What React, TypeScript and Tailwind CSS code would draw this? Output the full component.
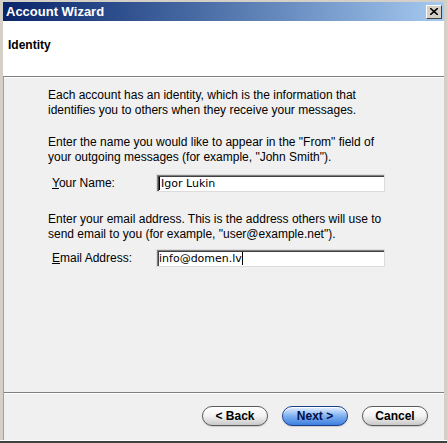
import React from 'react';

const FONT = { fontFamily: '"Liberation Sans", Arial, sans-serif' };

function WizardButton({ label, primary = false }: { label: string; primary?: boolean }) {
  return (
    <button
      className={`h-[20px] w-[66px] rounded-full border text-[12px] font-bold leading-none ${
        primary
          ? 'border-[#1c3f8c] bg-gradient-to-b from-[#e8f2ff] via-[#7fb0f0] to-[#3d7fe0] text-[#00104a]'
          : 'border-[#5a5a5a] bg-gradient-to-b from-white via-[#f2f2f2] to-[#c9c9c9] text-black'
      } shadow-[inset_0_1px_0_rgba(255,255,255,0.9),0_1px_1px_rgba(0,0,0,0.15)]`}
    >
      {label}
    </button>
  );
}

function Field({ accessKey, rest, value, caretAfter }: { accessKey: string; rest: string; value: string; caretAfter?: boolean }) {
  return (
    <div className="flex items-center">
      <span className="w-[109px] pl-[4px] text-[12px] text-black">
        <span className="underline">{accessKey}</span>
        {rest}
      </span>
      <div className="flex h-[16px] w-[227px] items-center border-l border-t border-[#808080] bg-white shadow-[inset_1px_1px_0_#404040] outline outline-1 outline-[#dcdcdc]">
        {!caretAfter && <span className="ml-[1px] h-[13px] w-px bg-black" />}
        <span className="pl-[1px] leading-none text-black" style={{ fontFamily: '"DejaVu Sans", sans-serif', fontSize: 11 }}>
          {value}
        </span>
        {caretAfter && <span className="h-[13px] w-px bg-black" />}
      </div>
    </div>
  );
}

export default function App() {
  return (
    <div className="h-[443px] w-[447px] overflow-hidden bg-[#d4d0c8]" style={FONT}>
      <div className="flex h-[440px] flex-col pl-[3px] pr-[3px] pt-[2px]">
        {/* title bar */}
        <div className="flex h-[19px] shrink-0 items-center justify-between bg-gradient-to-r from-[#0a246a] to-[#a6caf0] pl-[3px] pr-[2px]">
          <span className="text-[13px] font-bold text-white">Account Wizard</span>
          <span className="flex h-[14px] w-[16px] items-center justify-center border border-b-[#404040] border-l-white border-r-[#404040] border-t-white bg-[#d4d0c8]">
            <svg width="8" height="7" viewBox="0 0 8 7">
              <path d="M0 0 L8 7 M8 0 L0 7" stroke="black" strokeWidth="1.6" />
            </svg>
          </span>
        </div>

        {/* header */}
        <div className="h-[56px] shrink-0 border-b border-[#808080] bg-white px-[5px] pt-[11px]">
          <span className="text-[12px] font-bold text-black">Identity</span>
        </div>

        {/* body */}
        <div className="flex flex-1 flex-col border-l border-[#a0a0a0] bg-[#f0f0f0]">
          <div className="flex-1 border-t border-white pl-[44px] pt-[10px] text-[12px] leading-[15px] text-black">
            <p>
              Each account has an identity, which is the information that
              <br />
              identifies you to others when they receive your messages.
            </p>
            <p className="mt-[17px]">
              Enter the name you would like to appear in the "From" field of
              <br />
              your outgoing messages (for example, "John Smith").
            </p>
            <div className="mt-[10px]">
              <Field accessKey="Y" rest="our Name:" value="Igor Lukin" />
            </div>
            <p className="mt-[21px]">
              Enter your email address. This is the address others will use to
              <br />
              send email to you (for example, "user@example.net").
            </p>
            <div className="mt-[8px]">
              <Field accessKey="E" rest="mail Address:" value="info@domen.lv" caretAfter />
            </div>
          </div>

          <div className="flex h-[48px] shrink-0 items-start justify-end gap-[14px] border-t border-[#808080] pr-[16px] pt-[13px] shadow-[inset_0_1px_0_white]">
            <WizardButton label="< Back" />
            <WizardButton label="Next >" primary />
            <WizardButton label="Cancel" />
          </div>
        </div>
      </div>
      <div className="h-[3px] border-t border-white bg-[#404040]" />
    </div>
  );
}
